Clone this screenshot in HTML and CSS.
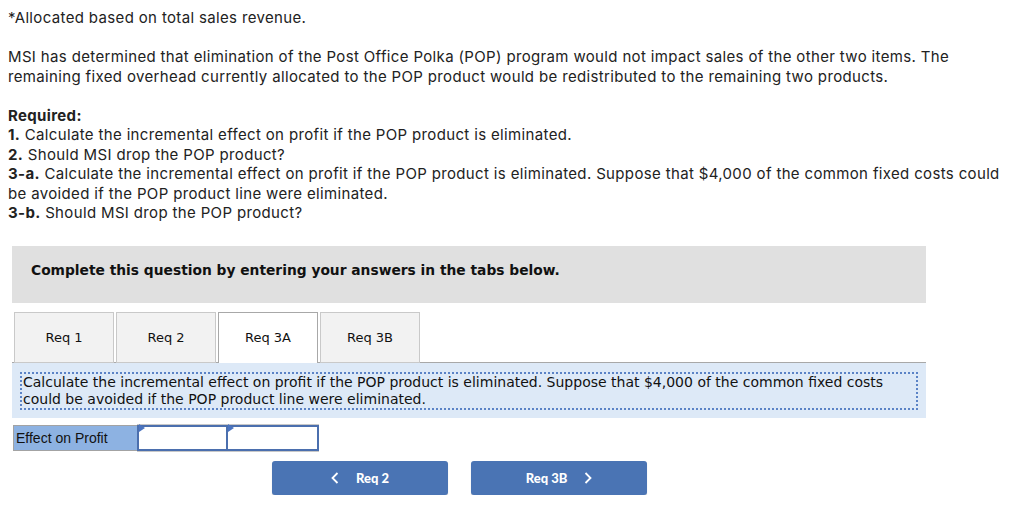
FILE: index.html
```html
<!DOCTYPE html>
<html>
<head>
<meta charset="utf-8">
<link rel="stylesheet" href="styles.css">
</head>
<body>
<p class="txt">*Allocated based on total sales revenue.</p>
<p class="txt">MSI has determined that elimination of the Post Office Polka (POP) program would not impact sales of the other two items. The remaining fixed overhead currently allocated to the POP product would be redistributed to the remaining two products.</p>
<p class="txt"><b>Required:</b><br>
<b>1.</b> Calculate the incremental effect on profit if the POP product is eliminated.<br>
<b>2.</b> Should MSI drop the POP product?<br>
<b>3-a.</b> Calculate the incremental effect on profit if the POP product is eliminated. Suppose that $4,000 of the common fixed costs could be avoided if the POP product line were eliminated.<br>
<b>3-b.</b> Should MSI drop the POP product?</p>

<div class="question">
  <div class="instr">Complete this question by entering your answers in the tabs below.</div>
  <div class="tabs">
    <div class="tab">Req 1</div>
    <div class="tab">Req 2</div>
    <div class="tab active">Req 3A</div>
    <div class="tab">Req 3B</div>
  </div>
  <div class="panel">
    <div class="prompt">Calculate the incremental effect on profit if the POP product is eliminated. Suppose that $4,000 of the common fixed costs could be avoided if the POP product line were eliminated.</div>
  </div>
  <div class="answer">
    <div class="label">Effect on Profit</div>
    <div class="cell"><span class="flag"></span></div>
    <div class="cell"><span class="flag"></span></div>
  </div>
  <div class="nav">
    <button class="btn"><svg class="chev" width="8" height="12" viewBox="0 0 8 12"><polyline points="6.5,1 1.5,6 6.5,11" fill="none" stroke="#fff" stroke-width="1.8"/></svg><span>Req 2</span></button>
    <button class="btn"><span>Req 3B</span><svg class="chev" width="8" height="12" viewBox="0 0 8 12"><polyline points="1.5,1 6.5,6 1.5,11" fill="none" stroke="#fff" stroke-width="1.8"/></svg></button>
  </div>
</div>
</body>
</html>
```
FILE: styles.css
```css
body {
  margin: 8px;
  background: #fff;
  color: #222;
  font-family: "Inter", "Liberation Sans", sans-serif;
}
.txt {
  font-size: 15px;
  line-height: 19.5px;
  letter-spacing: 0.35px;
  margin: 0 0 19.5px 0;
}
.txt b { font-weight: 700; }
.question {
  margin: 23px 0 0 4px;
  width: 914px;
}
.instr {
  background: #e0e0e0;
  height: 57px;
  box-sizing: border-box;
  padding: 16px 0 0 19px;
  font-family: "DejaVu Sans", Verdana, sans-serif;
  font-weight: bold;
  font-size: 13.8px;
  line-height: 17px;
  color: #111;
}
.tabs {
  display: flex;
  gap: 2px;
  margin-top: 9px;
  padding-left: 2px;
  border-bottom: 1px solid #a8a8a8;
  height: 50px;
}
.tab {
  width: 100px;
  height: 51px;
  box-sizing: border-box;
  border: 1px solid #c9c9c9;
  background: #f2f2f2;
  display: flex;
  align-items: center;
  justify-content: center;
  font-family: "DejaVu Sans", Verdana, sans-serif;
  font-size: 13px;
  color: #111;
}
.tab.active {
  background: #fff;
  border-color: #a8a8a8;
  border-bottom: none;
  position: relative;
  z-index: 1;
}
.panel {
  background: #dde9f7;
  padding: 9px 8px 8px 8px;
  height: 55px;
  box-sizing: border-box;
}
.prompt {
  border: 2px dotted #5b83c6;
  padding: 0 0 0 1px;
  font-family: "DejaVu Sans", Verdana, sans-serif;
  font-size: 14px;
  line-height: 17px;
  color: #111;
}
.answer {
  display: flex;
  margin-top: 7px;
  margin-left: 1px;
  height: 26px;
}
.label {
  width: 124px;
  box-sizing: border-box;
  background: #8db2e2;
  border: 1px solid #a3a3a3;
  border-right: none;
  font-family: "Liberation Sans", Arial, sans-serif;
  font-size: 14px;
  line-height: 24px;
  padding-left: 2px;
  color: #111;
}
.cell {
  width: 91px;
  box-sizing: border-box;
  border: 2px solid #4b6fae;
  background: #fff;
  position: relative;
  box-shadow: 0 1px 0 #c8c8c8, 0 -1px 0 #c8c8c8;
}
.cell + .cell { border-left: none; }
.flag {
  position: absolute;
  left: 0;
  top: 0;
  width: 0;
  height: 0;
  border-top: 4px solid transparent;
  border-bottom: 4px solid transparent;
  border-left: 6px solid #4b74c0;
  transform: translateY(-3px);
}
.nav {
  display: flex;
  gap: 23px;
  margin: 10px 0 0 260px;
}
.btn {
  width: 176px;
  height: 34px;
  border: none;
  border-radius: 3px;
  background: #4a74b4;
  color: #fff;
  font-family: "Lato", "Liberation Sans", sans-serif;
  font-weight: 900;
  font-size: 13px;
  display: flex;
  align-items: center;
  justify-content: center;
  gap: 17px;
  padding: 0;
  box-shadow: 0 1px 1px rgba(0,0,0,0.2);
}
.chev { display: block; }
```
